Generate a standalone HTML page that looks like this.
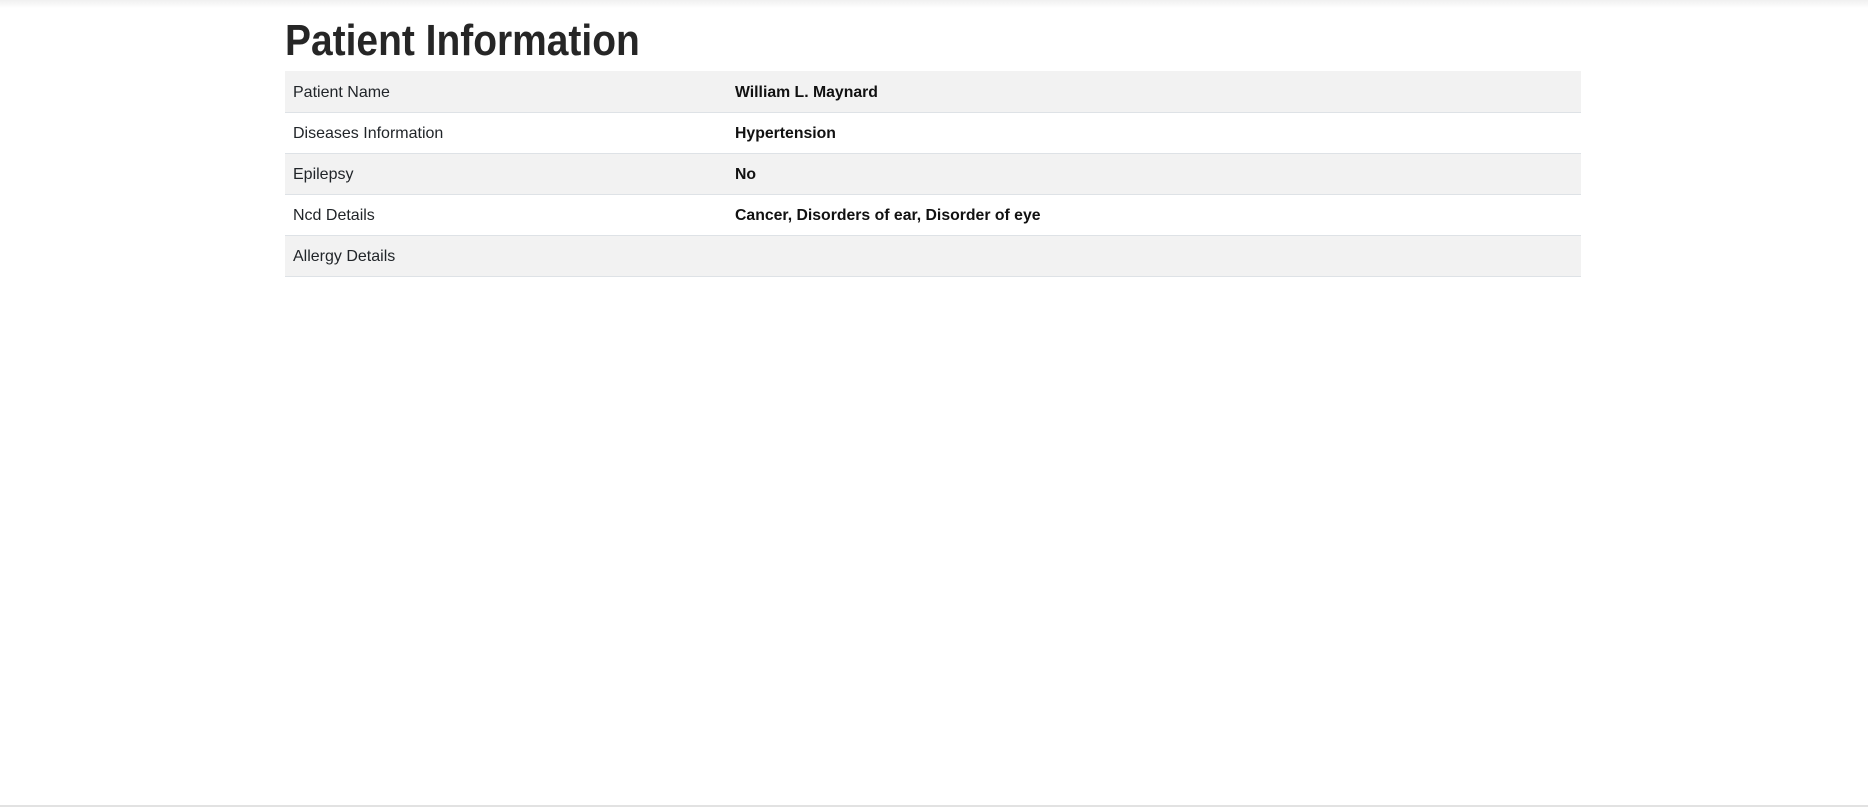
<!DOCTYPE html>
<html><head><style>
html,body{margin:0;padding:0;background:#fff;width:1868px;height:808px;overflow:hidden;font-family:"Liberation Sans",sans-serif;color:#212529;}
.top{position:absolute;left:0;top:0;width:1868px;height:8px;background:linear-gradient(#f0f0f0,#fff);}
h1{position:absolute;left:285px;top:15px;margin:0;font-size:44px;font-weight:bold;line-height:52px;transform-origin:left top;transform:scaleX(0.885);white-space:nowrap;color:#262626;}
table{position:absolute;left:285px;top:71px;width:1296px;border-collapse:collapse;font-size:16px;}
td{height:41px;padding:3px 8px 0;box-sizing:border-box;border-bottom:1px solid #dee2e6;vertical-align:middle;}
tr:nth-child(odd) td{background:#f2f2f2;}
td.l{width:442px;}
td.v{font-weight:bold;color:#111;font-size:15.8px;}
.bot{position:absolute;left:0;top:805px;width:1868px;height:2px;background:#e2e2e2;}
</style></head><body>
<div class="top"></div>
<h1>Patient Information</h1>
<table>
<tr><td class="l">Patient Name</td><td class="v">William L. Maynard</td></tr>
<tr><td class="l">Diseases Information</td><td class="v">Hypertension</td></tr>
<tr><td class="l">Epilepsy</td><td class="v">No</td></tr>
<tr><td class="l">Ncd Details</td><td class="v">Cancer, Disorders of ear, Disorder of eye</td></tr>
<tr><td class="l">Allergy Details</td><td class="v"></td></tr>
</table>
<div class="bot"></div>
</body></html>
